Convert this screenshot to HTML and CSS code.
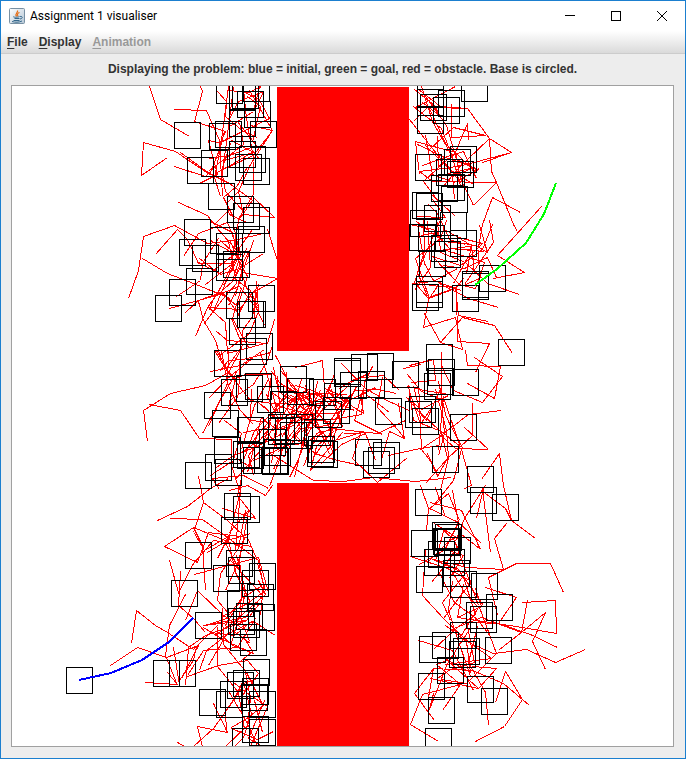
FILE: index.html
```html
<!DOCTYPE html>
<html lang="en">
<head>
<meta charset="utf-8">
<title>Assignment 1 visualiser</title>
<link rel="stylesheet" href="styles.css">
</head>
<body>
<div class="window">
  <header class="titlebar">
    <svg class="app-icon" viewBox="0 0 16 16" aria-hidden="true">
      <defs><linearGradient id="tile" x2="1" y2="1"><stop stop-color="#fff"/><stop offset="1" stop-color="#b4c6d5"/></linearGradient></defs>
      <rect x=".5" y=".5" width="15" height="15" rx="1" fill="url(#tile)" stroke="#7890a3"/>
      <path d="M8.500 2.500c1 2-3 2.500-1 6M10.500 4.500c-3 1-2 2-1.500 4" fill="none" stroke="#e66c13" stroke-width="1.200"/>
      <path d="M4.500 8.500c-1 1 5 1 6 0M5.500 10.500h5M4.500 12.500h6M3 13.500c3 1 7 1 10-.5M11 8.500c3-.5 3 2 0 2.500" fill="none" stroke="#35688c"/>
    </svg>
    <h1 class="title">Assignment 1 visualiser</h1>
    <div class="controls">
      <button class="control" aria-label="Minimize"><svg viewBox="0 0 10 10"><path d="M0 4.500h10"/></svg></button>
      <button class="control" aria-label="Maximize"><svg viewBox="0 0 10 10"><path d="M.5.5h9v9h-9z"/></svg></button>
      <button class="control control-close" aria-label="Close"><svg viewBox="0 0 10 10"><path d="M0 0l10 10M10 0L0 10"/></svg></button>
    </div>
  </header>
  <nav class="menubar">
    <button class="menu"><u>F</u>ile</button>
    <button class="menu"><u>D</u>isplay</button>
    <button class="menu" disabled><u>A</u>nimation</button>
  </nav>
  <main class="content">
    <p class="message">Displaying the problem: blue = initial, green = goal, red = obstacle. Base is circled.</p>
    <div class="canvas">
    <svg class="plot" viewBox="12 86 661 660" role="img" aria-label="Robot arm configurations around two obstacles">
      <g transform="translate(.5 .5)">
      <!-- Arms, left side -->
      <path class="arm" d="M149 86L160 119L189 136M200 86L202 91L194 121L225 131L220 142M174 109L206 110L219 140L222 196
      M167 157L141 175L143 142L175 151L209 174L220 147L224 131M174 166L205 176L220 161L253 152L231 140M178 202L207 215L214 224L228 210
      M217 91L226 101L225 116L243 131L257 137M249 90L272 130L253 155L227 167M250 125L272 130L250 164L238 191M215 173L235 162L253 151L259 159
      M220 196L214 177L220 147L228 86M238 191L226 203L229 214L246 222M253 197L274 217L243 214L238 191M253 161L253 194L237 220
      M180 152L209 173L229 183L252 200L238 220M199 183L217 174L208 140L222 143M228 90L248 92L261 86M244 92L258 98L269 118L238 133L220 142
      M229 118L238 101L263 91L254 110M243 88L246 118L253 158M233 87L228 126L221 180M259 86L253 111L229 126M247 96L260 106L252 142
      M209 158L229 155L256 145L237 121M240 125L243 144L209 170M230 143L221 170L225 191L245 213M246 168L237 185L223 197L234 219"/>
      <path class="arm" d="M128 298L138 270L143 236L174 225L207 243L233 240L263 233M155 254L177 229L187 239L198 263L230 263M142 258L167 273L193 283L230 298
      M176 296L200 280L202 263L218 238M169 308L198 300L223 293L237 312M195 336L207 307L217 293L234 260M185 312L198 300L220 292L242 310
      M198 301L203 320L215 340L221 360M208 307L225 322L227 353L268 342M267 229L277 260M242 272L277 278L248 295L237 316M183 256L198 233L227 222L239 253
      M253 240L242 272L237 288L228 305M233 225L240 255L231 283M220 240L233 252L243 263L235 296M216 227L238 252L227 278L212 313M274 319L267 343L227 340L216 331
      M258 284L252 316L242 330L241 345M230 241L238 260L245 285L257 308M249 250L234 278L250 290L257 306M238 220L231 264L205 284M198 262L213 270L235 253L252 229
      M207 307L239 309L255 289L254 319M231 318L242 345L228 365M218 294L239 286L256 308L264 325M228 241L236 283L222 299L203 324M240 290L232 318L248 347
      M210 240L235 254L247 276L237 306M256 281L258 311L249 333L219 355M210 221L232 232L238 257L223 285M246 248L233 280L213 298L209 310M199 258L220 274L239 268L263 253"/>
      <path class="arm" d="M147 441L143 410L170 393L205 385L228 372L241 348M149 404L180 410L199 438L231 439L231 475M198 476L201 490M202 433L218 403L237 370
      M208 398L227 378L253 357M216 350L228 371L235 378L228 407M210 371L240 365L264 349M219 371L228 360L243 359L270 352M230 380L245 374L271 374L267 400
      M221 350L227 383L239 409L253 424M251 388L250 420L270 422L263 442M260 353L269 382L277 411L252 441M243 432L269 427L248 455L253 475
      M216 467L233 455L257 446L282 433M224 420L241 433L231 465L239 490M213 478L243 475L268 488M257 401L277 419L260 450L234 480M229 400L253 384L267 360L272 345
      M228 350L227 383L208 426M240 350L238 395L218 423M268 379L254 405L241 449M277 430L261 417L247 472M266 394L278 419L271 463M243 460L254 430L273 411L290 388
      M214 350L227 371L250 400L279 404M241 452L268 433L278 449L253 460M269 486L281 454L280 425L264 406M249 466L236 458L210 475L219 489"/>
      <!-- Arms, central passage -->
      <path class="arm" d="M295 367L322 360L324 388L343 396M286 372L287 410L301 427L283 457M273 367L278 391L313 414L301 445M270 414L301 392L318 408L332 380
      M277 376L280 420L302 405L294 387M284 435L299 405L326 397L354 410M279 406L310 414L292 436L315 453M305 385L317 413L333 428L313 457M273 393L302 415L324 434L334 455
      M270 403L287 403L315 393L331 405M295 385L312 390L332 400L340 421M290 395L305 401L320 433L307 451M334 373L326 398L306 426L294 477M347 399L330 428L303 443L284 445
      M331 389L342 426L316 433L303 466M356 386L343 412L331 441L364 431M382 377L377 407L398 430L404 438M396 393L373 388L344 402L330 430M389 412L362 391L354 420L382 434
      M338 397L363 413L360 395L375 387M403 368L421 364M399 390L383 375L355 378L339 388M405 420L377 433L330 428L318 413M270 453L313 480L343 481L373 477L415 481L451 477
      M295 435L314 453L337 460L361 465M343 433L360 433L352 458L377 482L407 457M381 459L389 431L404 438L398 403M388 455L415 449L439 445M337 399L307 405L289 424L281 437
      M305 390L291 401L276 425L272 445M309 421L299 396L279 382L271 371M324 405L307 434L298 459L289 477M312 401L301 419L330 421L333 452M277 452L301 428L327 425L344 399
      M284 385L312 402L293 425L275 430M334 430L316 446L310 470L342 432M326 389L340 404L355 390L381 389M301 379L291 412L307 420L316 404M273 469L288 437L307 413L320 390
      M275 355L291 386L303 398L318 425M317 381L310 413L338 413L341 427M286 443L292 409L304 391L328 398M300 433L318 414L352 381L370 372M272 430L299 420L312 401L304 388
      M341 363L365 388L384 399L409 410M321 463L341 444L365 433L375 460M372 366L364 382L361 414L332 419M280 370L301 395L318 393L347 394M273 408L288 395L316 420L329 454"/>
      <!-- Arms, right side -->
      <path class="arm" d="M414 89L434 105L439 115L422 102M421 86L432 121L449 151L457 172M418 89L440 106L467 108L489 138L491 171L496 182L513 224M435 107L467 108M489 138L511 152L482 162M511 152L466 164L450 167L419 171
      M451 137L485 135L453 127L430 148M492 197L520 212M492 197L482 224L478 247M473 205L496 182L432 181L419 171M473 205L460 178L455 152L415 141L419 174
      M541 206L497 255L524 272L493 278M513 224L517 231M519 294L487 283L465 262L440 252M498 307L468 298L439 283L430 296M488 321L458 315L455 287L429 285M512 353L494 325L462 317L440 342
      M424 313L440 342L462 349L455 317L423 327L428 299M489 343L457 341L456 287L428 297M489 343L475 372M415 107L455 86M413 121L428 106L445 143L477 173M425 135L432 174L454 182L479 168
      M437 136L438 166L454 154L467 123L468 140M451 103L451 137M466 160L489 138M413 106L441 128L452 157L460 185M409 119L440 158L451 170L473 184M422 165L450 155L463 151L476 178
      M417 144L440 155L462 163L442 187M448 158L423 181L438 201M454 199L452 176L474 167L440 175M425 96L446 125L456 159L478 170M429 192L455 216M416 216L445 217L432 199M461 183L451 171L425 145"/>
      <path class="arm" d="M423 220L424 251L414 282M437 222L440 250L475 245L487 252L479 225M446 220L440 238L415 258L429 298M416 221L443 241L471 244L466 273M409 224L433 229L449 248L484 251
      M489 220L493 242L475 268L464 284M492 224L482 249L460 265L432 256L459 284M465 244L449 239L437 213L428 204M443 249L484 262L475 288L458 284M418 229L424 263L433 280L461 290
      M450 248L478 250L479 278L463 285M458 237L482 243L466 259L453 283M414 282L428 298L455 288L463 278M457 268L433 281L412 283M427 221L430 267L414 290M439 221L428 247L417 272L427 296
      M496 277L487 257L464 268L443 265M421 235L446 230L471 245L474 274M465 350L467 365L500 366L494 398L467 383M474 357L502 376L482 402L453 390L441 365M501 410L468 414L438 437L420 449
      M472 402L472 435L447 458L425 483M488 449L464 427M488 449L455 448L438 433M409 365L433 359L435 380L411 382M407 374L421 391L444 400L460 447M441 351L441 400L444 433L438 455
      M435 389L446 430L448 457L440 490M407 386L424 390L455 395M413 386L420 412L441 432L447 458L437 476L427 453M406 397L421 409L448 395M408 385L413 420L441 431L461 447
      M418 382L421 449L432 463L437 475M431 407L420 424L409 391M438 381L445 414L449 423L463 449M443 396L438 450M440 388L426 420L406 397M464 488L471 485L461 449L453 480L433 505"/>
      <path class="arm" d="M535 538L511 520L503 485L499 453L481 479M563 592L550 563L516 563L488 577L497 615M506 523L494 538L503 569L467 567L433 559M545 669L532 641L545 612L521 632L481 617L451 629
      M522 602L555 600L556 633L522 627L457 617M527 600L521 632L499 649M557 647L530 634L498 623L470 622M585 649L555 662L526 649L493 653L468 642M529 705L503 683L472 670L433 668
      M475 741L504 726L522 699L505 671L495 702M488 725L485 692L468 662L477 626M438 741L410 724L422 694L460 684M410 556L447 568L471 581L443 618L468 642M443 618L422 595L425 549
      M485 587L516 597L498 623M490 552L482 488M418 640L452 650L473 690M434 720L414 693L433 668L428 697M420 485L428 508L426 530M430 502L461 510L480 549M429 508L458 522L481 543
      M445 517L435 487M452 490L458 522L445 548M485 485L481 490L505 508L511 520M476 518L483 488L464 518L455 541M428 509L448 493L459 520M437 524L454 540L467 575L478 605M443 531L435 560L457 568L483 605
      M430 558L465 573L442 602L450 620M427 562L448 541L461 534L479 548M434 523L461 540L446 563L431 582M452 581L448 609L453 626L470 676M463 584L457 617L481 606L475 588
      M434 648L457 627L475 614L463 577M442 710L460 684L436 664L447 660L478 688M479 607L496 653L466 683L441 679M419 564L445 549L463 555L449 578M438 571L454 602L477 619L490 636
      M430 678L478 688L496 668L472 666M445 625L466 641L470 672L446 659M433 693L429 709L447 663L469 629M451 570L464 592L478 607L459 638M453 629L472 644L491 658L445 664M467 626L474 662L450 669L437 678"/>
      <!-- Arms, lower left -->
      <path class="arm" d="M157 520L187 506L210 488L228 478M170 518L202 519L227 537L258 560L263 585L260 615M193 532L203 502L200 485M203 502L227 520L243 535M193 527L164 546L197 562L208 532L247 537L256 558
      M169 560L178 592L193 563L213 540L252 546M180 571L178 605L193 618L205 632M185 620L197 590L223 615L242 628M194 574L227 565L258 557L268 592M205 590L202 545L193 527L237 545M131 643L136 610L155 625L167 632L193 649L217 625
      M185 594L169 625L165 655L177 685M222 508L255 518L237 495L241 478L235 550M228 533L248 510L239 560L242 585M229 490L247 485L265 495L272 485M194 533L204 550L228 536L217 558
      M240 490L228 540L235 572L250 602M245 510L238 548L220 573L217 600L230 615M207 552L227 540L250 533M225 543L242 575L240 610L229 650M230 560L262 595L245 617L203 625M258 580L265 594L235 620L216 634
      M110 665L137 647L166 657L198 645L181 678M145 682L177 684L167 672M173 647L179 685M185 685L188 647L205 635L247 620M187 675L203 650L237 647L255 618M187 676L218 665L247 660L258 673L240 698
      M177 742L184 746M202 746L197 726L227 732L213 703M193 746L213 728L233 700L242 682M208 665L226 634L253 621L275 635M203 627L224 640L251 652L241 660M217 626L217 666L238 692L244 729
      M252 620L234 635L211 632M222 608L223 644L246 672L263 706M243 681L251 713L243 737L234 746M264 700L248 738L262 746M245 672L250 698L247 725L225 746M262 706L245 719L231 727
      M233 682L250 695L267 706L250 746M229 692L247 723L257 746M243 636L253 653L232 645L219 633M226 732L225 711L245 682L257 678M254 700L262 732M231 728L257 739L273 731M203 625L246 620L259 603M240 600L225 625L250 643
      M236 555L245 590L240 617L249 641M244 538L237 564L225 590M262 585L241 598L226 618L205 625M222 616L247 603L265 590L257 563M199 670L206 650L231 631M179 680L193 660L196 646"/>
      <!-- Robot bases -->
      <path class="base" d="M174 122h26v26h-26zM216 77h26v26h-26zM229 83h26v26h-26zM232 82h26v26h-26zM237 91h26v26h-26zM243 75h26v26h-26zM244 101h26v26h-26zM229 110h26v26h-26zM215 121h26v26h-26zM209 123h26v26h-26zM250 121h26v26h-26zM229 141h26v26h-26zM239 146h26v26h-26zM235 154h26v26h-26zM243 158h26v26h-26zM201 150h26v26h-26zM187 157h26v26h-26zM208 183h26v26h-26zM227 196h26v26h-26zM233 203h26v26h-26zM184 219h26v26h-26zM210 227h26v26h-26zM216 233h26v26h-26zM238 226h26v26h-26zM179 239h26v26h-26zM192 245h26v26h-26zM223 251h26v26h-26zM216 254h26v26h-26zM186 268h26v26h-26zM169 279h26v26h-26zM155 295h26v26h-26zM226 292h26v26h-26zM248 285h26v26h-26zM237 301h26v26h-26zM239 301h26v26h-26zM229 318h26v26h-26zM246 333h26v26h-26zM214 350h26v26h-26z
      M243 207h26v26h-26zM240 338h26v26h-26zM236 375h26v26h-26zM245 373h26v26h-26zM221 379h26v26h-26zM257 386h26v26h-26zM204 392h26v26h-26zM212 410h26v26h-26zM237 417h26v26h-26zM214 437h26v26h-26zM233 441h26v26h-26zM237 442h26v26h-26zM243 447h26v26h-26zM205 454h26v26h-26zM215 459h26v26h-26zM185 462h26v26h-26zM268 414h26v26h-26zM259 429h26v26h-26zM261 447h26v26h-26zM262 448h26v26h-26zM254 447h26v26h-26zM264 439h26v26h-26zM268 418h26v26h-26zM270 391h26v26h-26z
      M280 366h26v26h-26zM287 378h26v26h-26zM309 379h26v26h-26zM334 358h26v26h-26zM334 360h26v26h-26zM351 354h26v26h-26zM367 353h26v26h-26zM392 361h26v26h-26zM340 372h26v26h-26zM358 371h26v26h-26zM324 383h26v26h-26zM323 397h26v26h-26zM315 401h26v26h-26zM375 398h26v26h-26zM355 439h26v26h-26zM363 451h26v26h-26zM368 447h26v26h-26zM373 442h26v26h-26zM304 419h26v26h-26zM307 440h26v26h-26zM308 436h26v26h-26zM311 441h26v26h-26zM286 422h26v26h-26zM280 422h26v26h-26zM275 417h26v26h-26zM286 414h26v26h-26z
      M417 80h26v26h-26zM417 107h26v26h-26zM417 89h26v26h-26zM420 94h26v26h-26zM438 90h26v26h-26zM433 97h26v26h-26zM461 75h26v26h-26zM450 146h26v26h-26zM444 149h26v26h-26zM415 154h26v26h-26zM436 159h26v26h-26zM447 161h26v26h-26zM431 175h26v26h-26zM438 174h26v26h-26zM441 186h26v26h-26zM412 192h26v26h-26zM416 193h26v26h-26zM424 205h26v26h-26zM410 210h26v26h-26zM440 212h26v26h-26zM418 225h26v26h-26zM409 224h26v26h-26zM431 235h26v26h-26zM434 241h26v26h-26zM450 230h26v26h-26zM419 250h26v26h-26zM479 265h26v26h-26zM462 271h26v26h-26zM462 273h26v26h-26zM452 285h26v26h-26zM416 276h26v26h-26zM416 281h26v26h-26zM412 284h26v26h-26zM498 339h26v26h-26zM426 344h26v26h-26zM428 359h26v26h-26zM427 368h26v26h-26zM424 373h26v26h-26zM452 369h26v26h-26zM409 396h26v26h-26zM405 401h26v26h-26zM412 408h26v26h-26zM450 414h26v26h-26zM432 446h26v26h-26zM467 466h26v26h-26zM470 487h26v26h-26z
      M224 493h26v26h-26zM233 496h26v26h-26zM221 517h26v26h-26zM185 542h26v26h-26zM171 580h26v26h-26zM226 550h26v26h-26zM228 557h26v26h-26zM213 565h26v26h-26zM249 563h26v26h-26zM242 570h26v26h-26zM247 584h26v26h-26zM227 590h26v26h-26zM248 604h26v26h-26zM236 603h26v26h-26zM228 608h26v26h-26zM233 611h26v26h-26zM195 612h26v26h-26zM230 624h26v26h-26zM240 629h26v26h-26zM66 667h26v26h-26zM153 660h26v26h-26zM169 660h26v26h-26zM243 659h26v26h-26zM227 672h26v26h-26zM233 670h26v26h-26zM220 681h26v26h-26zM242 678h26v26h-26zM241 684h26v26h-26zM199 689h26v26h-26zM216 691h26v26h-26zM249 691h26v26h-26zM242 716h26v26h-26zM249 719h26v26h-26zM232 728h26v26h-26z
      M415 489h26v26h-26zM492 494h26v26h-26zM432 522h26v26h-26zM435 524h26v26h-26zM411 530h26v26h-26zM433 528h26v26h-26zM434 529h26v26h-26zM444 537h26v26h-26zM424 549h26v26h-26zM428 541h26v26h-26zM438 549h26v26h-26zM443 560h26v26h-26zM416 566h26v26h-26zM450 571h26v26h-26zM471 573h26v26h-26zM486 594h26v26h-26zM466 602h26v26h-26zM470 606h26v26h-26zM450 622h26v26h-26zM432 632h26v26h-26zM419 636h26v26h-26zM449 641h26v26h-26zM453 638h26v26h-26zM485 637h26v26h-26zM437 657h26v26h-26zM418 673h26v26h-26zM467 676h26v26h-26zM481 688h26v26h-26zM428 697h26v26h-26zM425 728h26v26h-26z"/>
      </g>
      <rect class="obstacle" x="277" y="87" width="132" height="264"/>
      <rect class="obstacle" x="277" y="483" width="132" height="263"/>
      <path class="goal" d="M556 183L544 214L526 243L497 269L475 285"/>
      <path class="initial" d="M79 680L111 673L142 660L169 642L193 618"/>
    </svg>
    </div>
  </main>
</div>
</body>
</html>
```
FILE: styles.css
```css
* { box-sizing: border-box; }
body { margin: 0; background: #ededed; color: #333; font-family: "Liberation Sans", Arial, sans-serif; }
.window { min-height: 100vh; border: 1px solid #1b7fcf; background: #ededed; }
button { border: 0; padding: 0; background: none; color: inherit; font: inherit; }
.titlebar { display: flex; align-items: center; height: 30px; padding-left: 8px; background: #fff; color: #000; }
.app-icon { width: 16px; height: 16px; margin-right: 5px; }
.title { flex: 1; margin: 0; font: 400 12px Roboto, "Open Sans", sans-serif; }
.controls { display: flex; align-self: stretch; }
.control { display: flex; width: 46px; align-items: center; justify-content: center; }
.control svg { width: 10px; height: 10px; overflow: visible; fill: none; stroke: #000; shape-rendering: crispEdges; }
.control-close svg { shape-rendering: auto; }
.menubar { display: flex; gap: 11px; height: 23px; padding: 0 6px; background: linear-gradient(#fff, #dadada); border-bottom: 1px solid #ccc; font-size: 12px; font-weight: 700; }
.menu:disabled { color: #999; }
.menu u { text-underline-offset: 2px; text-decoration-thickness: 1px; }
.content { padding: 0 11px 11px 10px; }
.message { margin: 0; padding-bottom: 1px; font-size: 12px; font-weight: 700; line-height: 30px; text-align: center; }
.canvas { border: 1px solid #a0a0a0; background: #fff; }
.plot { display: block; width: 100%; }
.arm, .base { fill: none; stroke-width: 1; shape-rendering: crispEdges; }
.arm { stroke: #f00; }
.base { stroke: #000; }
.obstacle { fill: #f00; }
.goal, .initial { fill: none; stroke-width: 2; shape-rendering: crispEdges; }
.goal { stroke: #0f0; }
.initial { stroke: #00f; }
```
